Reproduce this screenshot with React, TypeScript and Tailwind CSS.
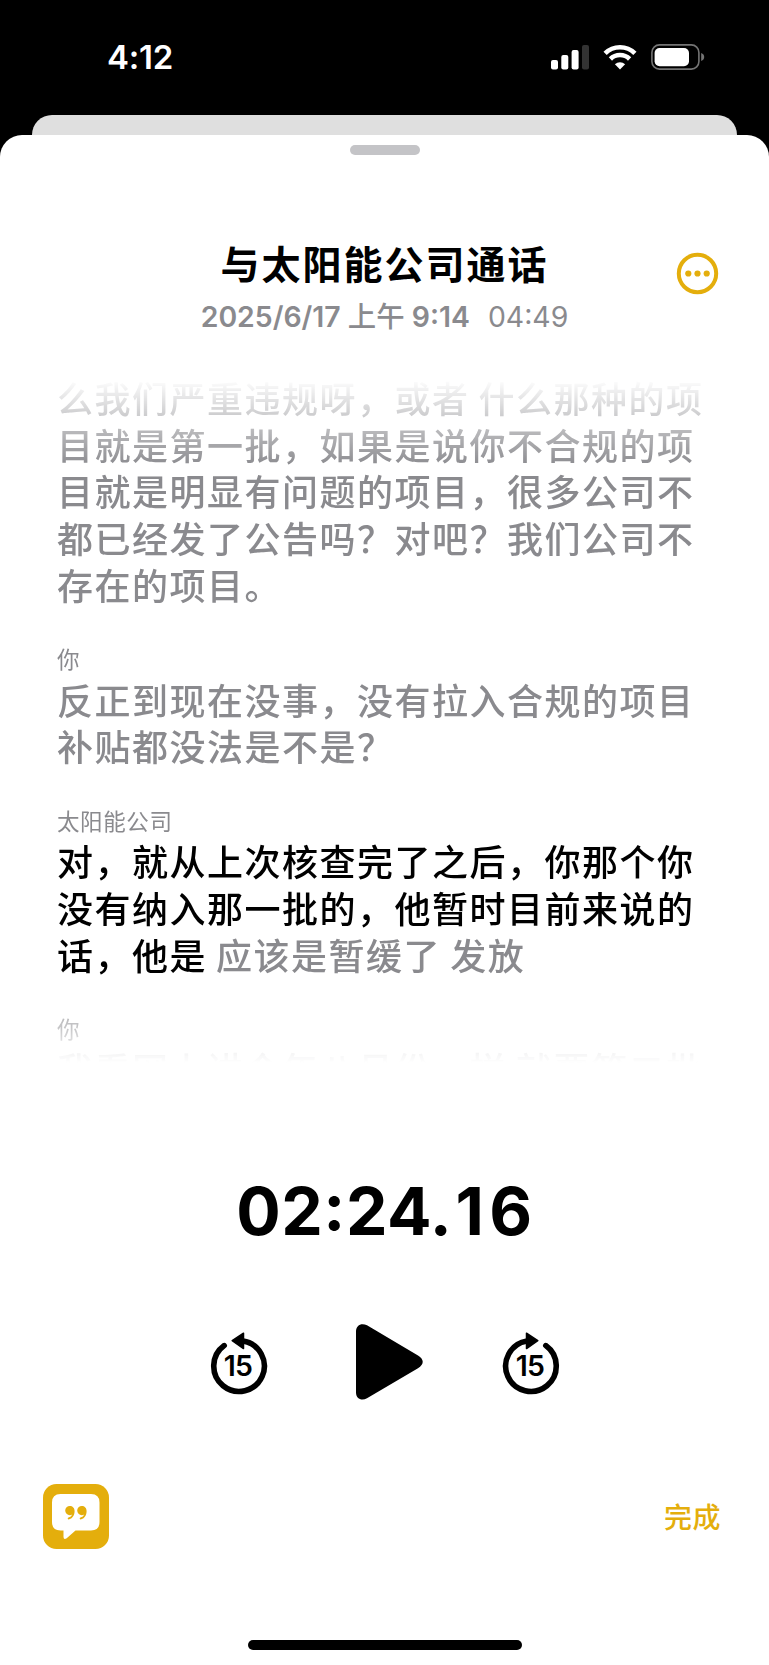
import React from 'react';

interface Segment {
  speaker?: string;
  lines: { text: string; muted?: string }[];
  active?: boolean;
}

const segments: Segment[] = [
  {
    lines: [
      { text: '么我们严重违规呀，或者 什么那种的项' },
      { text: '目就是第一批，如果是说你不合规的项' },
      { text: '目就是明显有问题的项目，很多公司不' },
      { text: '都已经发了公告吗？对吧？我们公司不' },
      { text: '存在的项目。' },
    ],
  },
  {
    speaker: '你',
    lines: [{ text: '反正到现在没事，没有拉入合规的项目' }, { text: '补贴都没法是不是？' }],
  },
  {
    speaker: '太阳能公司',
    active: true,
    lines: [
      { text: '对，就从上次核查完了之后，你那个你' },
      { text: '没有纳入那一批的，他暂时目前来说的' },
      { text: '话，他是', muted: ' 应该是暂缓了 发放' },
    ],
  },
  {
    speaker: '你',
    lines: [{ text: '我看网上讲今年八月份，样 就要第二批' }],
  },
];

const StatusBar = () => (
  <div className="flex h-[115px] items-start justify-between pl-[107px] pr-[64px] pt-[39px] text-white">
    <span className="text-[33px] leading-[36px] font-semibold tracking-[-0.2px]">4:12</span>
    <div className="flex items-center pt-[5px]">
      <svg width="38" height="26" viewBox="0 0 38 26" fill="currentColor">
        <rect x="0" y="16" width="7" height="9.5" rx="2" />
        <rect x="10.3" y="11" width="7" height="14.5" rx="2" />
        <rect x="20.6" y="6" width="7" height="19.5" rx="2" />
        <rect x="31" y="1" width="7" height="24.5" rx="2" fill="#333333" />
      </svg>
      <svg className="ml-[14px]" width="34" height="26" viewBox="0 0 34 26" fill="none" stroke="currentColor" strokeWidth="4.6">
        <path d="M2.1 9.4a21.2 21.2 0 0 1 29.8 0" />
        <path d="M7.4 15a13.6 13.6 0 0 1 19.2 0" />
        <path d="M17 25.5l-5.1-5.2a7.4 7.4 0 0 1 10.2 0z" fill="currentColor" stroke="none" />
      </svg>
      <svg className="ml-[14px]" width="54" height="26" viewBox="0 0 54 26" fill="none">
        <rect x="0.9" y="0.9" width="47" height="24.2" rx="7.6" stroke="#747474" strokeWidth="1.6" />
        <rect x="3.6" y="4" width="34.4" height="18.2" rx="5" fill="#fff" />
        <path d="M50.2 9v8q3-1.2 3-4t-3-4z" fill="#747474" />
      </svg>
    </div>
  </div>
);

const SkipIcon: React.FC<{ forward?: boolean }> = ({ forward = false }) => (
  <svg className="mt-[3px]" width="58" height="64" viewBox="0 0 58 64" fill="none">
    <g transform={forward ? 'translate(58 0) scale(-1 1)' : undefined}>
      <path d="M14.2 13.6A25.3 25.3 0 1 0 33 9.1" stroke="#000" strokeWidth="5.6" strokeLinecap="round" />
      <path d="M22.2 8.7L33.5 1.2v15.4z" fill="#000" stroke="#000" strokeWidth="1.5" strokeLinejoin="round" />
    </g>
    <text x="28" y="43.8" textAnchor="middle" fontSize="28.5" fontWeight="600" letterSpacing="-0.8" fill="#000">
      15
    </text>
  </svg>
);

const Transcript = () => (
  <div className="h-[686px] shrink-0 overflow-hidden pl-[57px] [mask-image:linear-gradient(to_bottom,transparent_2px,rgba(0,0,0,0.42)_38px,black_90px,black_598px,rgba(0,0,0,0.47)_652px,rgba(0,0,0,0.08)_677px,transparent_686px)]">
    {segments.map((segment, i) => (
      <div key={i} className="mb-[36.5px] whitespace-nowrap">
        {segment.speaker && (
          <p className="h-[31.7px] text-[22.5px] leading-[26px] tracking-[0.6px] text-[#8a8a8e]">{segment.speaker}</p>
        )}
        {segment.lines.map((line) => (
          <p
            key={line.text}
            className={`h-[46.7px] text-[36px] leading-[46.7px] font-medium tracking-[1.5px] [word-spacing:-2px] ${segment.active ? 'text-black' : 'text-[#8a8a8e]'}`}
          >
            {line.text}
            {line.muted && <span className="text-[#8a8a8e]">{line.muted}</span>}
          </p>
        ))}
      </div>
    ))}
  </div>
);

export default function App() {
  return (
    <div className="h-[1665px] w-[769px] overflow-hidden bg-black font-[Inter,'Noto_Sans_CJK_SC',sans-serif]">
      <StatusBar />
      <div className="mx-[32px] h-[20px] rounded-t-[20px] bg-[#dfdfdf]" />
      <div className="flex h-[1530px] flex-col rounded-t-[22px] bg-white">
        <div className="mx-auto mt-[10px] h-[10px] w-[70px] shrink-0 rounded-full bg-[#c4c4c7]" />

        <header className="relative mt-[86px] h-[136px] shrink-0 text-center">
          <h1 className="text-[39px] leading-[48px] font-bold tracking-[2px]">与太阳能公司通话</h1>
          <p className="mt-[10px] text-[28.4px] leading-[36px] whitespace-pre text-[#8a8a8e]">
            <span className="font-semibold">2025/6/17 </span>
            <span className="font-medium">上午</span>
            <span className="font-semibold"> 9:14</span>
            <span className="ml-[18px]">04:49</span>
          </p>
          <svg className="absolute top-[11px] right-[50px]" width="43" height="43" viewBox="0 0 43 43" fill="#e4ae0c">
            <circle cx="21.5" cy="21.5" r="18.7" fill="none" stroke="#e4ae0c" strokeWidth="4" />
            <circle cx="12.3" cy="21.5" r="3.1" />
            <circle cx="21.5" cy="21.5" r="3.1" />
            <circle cx="30.7" cy="21.5" r="3.1" />
          </svg>
        </header>

        <Transcript />

        <div className="mt-[104px] text-center text-[66px] leading-[88px] font-bold tracking-[0.5px]">
          02<span className="inline-block -translate-y-[5px]">:</span>24.<span className="mr-[5px] ml-[3px]">1</span>6
        </div>

        <div className="mt-[68px] flex h-[78px] items-center justify-center">
          <SkipIcon />
          <svg className="mr-[77px] ml-[87px]" width="70" height="78" viewBox="0 0 70 78" fill="#000">
            <path d="M1 8.5C1 2 6.5 -0.5 12 2.3L63 32.5C69.3 36.2 69.3 41.5 63 45.2L12 75.3C6.5 78.5 1 75.5 1 69.5z" />
          </svg>
          <SkipIcon forward />
        </div>

        <footer className="mt-[83px] flex items-center justify-between pr-[48px] pl-[43px]">
          <svg width="66" height="65" viewBox="0 0 66 65">
            <rect width="66" height="65" rx="13.5" fill="#e4ae0c" />
            <path d="M17.5 10h30.5q8.5 0 8.5 8.5v19.5q0 8.5-8.5 8.5H32.5l-8.8 7.8q-3 2-3.2-1.3v-6.5h-3q-8.5 0-8.5-8.5V18.5q0-8.5 8.5-8.5z" fill="#fff" />
            <path
              d="M26.8 22a4.6 4.6 0 0 0 0 9.2q1.4 0 2.4-.7-.8 2.3-3.7 3.1-1.1.5-.7 1.4.4.6 1.5.3c3.3-1 5.3-4.2 5.3-8.3 0-3-2-5-4.8-5zM38.8 22a4.6 4.6 0 0 0 0 9.2q1.4 0 2.4-.7-.8 2.3-3.7 3.1-1.1.5-.7 1.4.4.6 1.5.3c3.3-1 5.3-4.2 5.3-8.3 0-3-2-5-4.8-5z"
              fill="#e4ae0c"
            />
          </svg>
          <button className="mt-[2px] text-[28px] leading-[36px] font-medium tracking-[0.5px] text-[#e4ae0c]">完成</button>
        </footer>

        <div className="mx-auto mt-auto mb-[15px] h-[10px] w-[274px] shrink-0 rounded-full bg-black" />
      </div>
    </div>
  );
}
